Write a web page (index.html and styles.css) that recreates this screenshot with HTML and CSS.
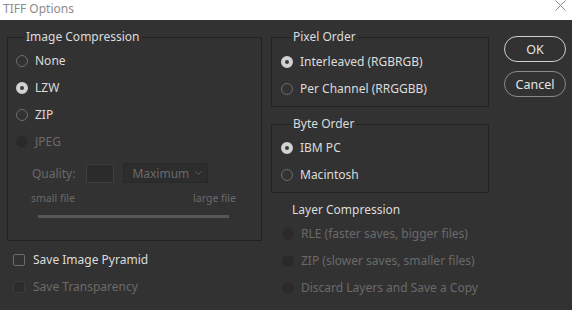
FILE: index.html
```html
<!DOCTYPE html>
<html lang="en">
<head>
    <meta charset="UTF-8">
    <title>TIFF Options</title>
    <link rel="stylesheet" href="styles.css">
</head>
<body>

    <div class="titlebar">
        <span class="title">TIFF Options</span>
        <svg class="close" width="11" height="11" viewBox="0 0 11 11">
            <path d="M0.5 0.5 L10.5 10.5 M10.5 0.5 L0.5 10.5" stroke="#8a8a8a" stroke-width="1" fill="none"/>
        </svg>
    </div>

    <main class="dialog">
        <!-- Left column -->
        <div class="col col-left">
            <fieldset class="group group-compression">
                <legend>Image Compression</legend>
                <label class="option"><span class="radio"></span>None</label>
                <label class="option"><span class="radio checked"></span>LZW</label>
                <label class="option"><span class="radio"></span>ZIP</label>
                <label class="option disabled"><span class="radio"></span>JPEG</label>

                <div class="quality-row">
                    <span class="quality-label">Quality:</span>
                    <span class="quality-input"></span>
                    <span class="quality-select">
                        Maximum
                        <svg class="chevron" width="7" height="4" viewBox="0 0 7 4">
                            <path d="M0.5 0.5 L3.5 3.5 L6.5 0.5" stroke="#5e5e5e" fill="none"/>
                        </svg>
                    </span>
                </div>
                <div class="size-labels">
                    <span>small file</span>
                    <span>large file</span>
                </div>
                <div class="slider"></div>
            </fieldset>

            <div class="checks">
                <label class="option"><span class="checkbox"></span>Save Image Pyramid</label>
                <label class="option disabled"><span class="checkbox"></span>Save Transparency</label>
            </div>
        </div>

        <!-- Middle column -->
        <div class="col col-mid">
            <fieldset class="group group-narrow">
                <legend>Pixel Order</legend>
                <label class="option"><span class="radio checked"></span>Interleaved (RGBRGB)</label>
                <label class="option"><span class="radio"></span>Per Channel (RRGGBB)</label>
            </fieldset>

            <fieldset class="group group-narrow group-byte">
                <legend>Byte Order</legend>
                <label class="option"><span class="radio checked"></span>IBM PC</label>
                <label class="option"><span class="radio"></span>Macintosh</label>
            </fieldset>

            <div class="layer">
                <div class="layer-title">Layer Compression</div>
                <label class="option disabled"><span class="radio"></span>RLE (faster saves, bigger files)</label>
                <label class="option disabled"><span class="radio"></span>ZIP (slower saves, smaller files)</label>
                <label class="option disabled"><span class="radio"></span>Discard Layers and Save a Copy</label>
            </div>
        </div>

        <!-- Buttons -->
        <div class="col col-buttons">
            <button class="btn btn-primary">OK</button>
            <button class="btn">Cancel</button>
        </div>
    </main>

</body>
</html>
```

FILE: styles.css
```css
/* --- Theme --- */
:root {
    --bg: #323232;
    --text: #dcdcdc;
    --text-disabled: #6a6a6a;
    --line: #222222;
    --radio-border: #6c6c6c;
}

* {
    box-sizing: border-box;
    margin: 0;
    padding: 0;
}

body {
    font-family: "Noto Sans", "Open Sans", sans-serif;
    font-size: 12px;
    background-color: var(--bg);
    color: var(--text);
    width: 572px;
    height: 310px;
    overflow: hidden;
}

/* --- Title bar --- */
.titlebar {
    height: 20px;
    background: #ffffff;
    display: flex;
    justify-content: space-between;
    align-items: flex-start;
}

.title {
    font-size: 12px;
    line-height: 17px;
    color: #8c8c8c;
    margin-left: 3px;
}

.close {
    margin: 0 6px 0 0;
}

/* --- Dialog layout --- */
.dialog {
    display: flex;
    padding: 9px 0 0 7px;
}

.col-left {
    width: 255px;
}

.col-mid {
    width: 218px;
    margin-left: 9px;
}

.col-buttons {
    margin-left: 15px;
    padding-top: 7px;
    display: flex;
    flex-direction: column;
    gap: 9px;
}

/* --- Groups --- */
.group {
    border: 1px solid var(--line);
    min-width: 0;
    padding: 2px 8px 22px 8px;
}

.group legend {
    line-height: 16px;
    padding: 0 2px;
    margin-left: 8px;
}

.group-narrow {
    padding: 3px 9px 4px 9px;
}

.group-narrow legend {
    margin-left: 10px;
}

.group-byte {
    margin-top: 9px;
    padding-top: 2px;
}

/* --- Options (radio / checkbox rows) --- */
.option {
    display: flex;
    align-items: center;
    height: 27px;
    gap: 7px;
    white-space: nowrap;
}

.option.disabled {
    color: var(--text-disabled);
}

.radio {
    width: 12px;
    height: 12px;
    border-radius: 50%;
    border: 1px solid var(--radio-border);
    flex-shrink: 0;
}

.radio.checked {
    border: 4px solid #d2d2d2;
    background: #3a3a3a;
}

.disabled .radio {
    border-color: #2a2a2a;
    background: #2a2a2a;
}

.checkbox {
    width: 12px;
    height: 12px;
    border: 1px solid var(--radio-border);
    border-radius: 2px;
    flex-shrink: 0;
}

.disabled .checkbox {
    border-color: #3c3c3c;
    background: #2c2c2c;
}

.checks {
    margin-top: 5px;
    padding-left: 6px;
}

.checks .option {
    gap: 8px;
}

/* --- Quality controls --- */
.quality-row {
    display: flex;
    align-items: center;
    height: 20px;
    margin: 8px 0 0 16px;
    color: var(--text-disabled);
}

.quality-input {
    width: 28px;
    height: 19px;
    border: 1px solid #3e3e3e;
    background: #2b2b2b;
    margin-left: 11px;
}

.quality-select {
    width: 85px;
    height: 20px;
    border: 1px solid #282828;
    border-radius: 2px;
    background: #2d2d2d;
    margin-left: 9px;
    padding-left: 8px;
    display: flex;
    align-items: center;
    justify-content: space-between;
}

.chevron {
    margin-right: 5px;
}

.size-labels {
    display: flex;
    justify-content: space-between;
    height: 14px;
    line-height: 14px;
    margin: 8px 17px 0 15px;
    font-size: 10.5px;
    color: var(--text-disabled);
}

.slider {
    height: 3px;
    width: 191px;
    background: #575757;
    margin: 10px 0 0 22px;
}

/* --- Layer compression --- */
.layer {
    padding-left: 11px;
    margin-top: 9px;
}

.layer-title {
    line-height: 16px;
    margin-left: 10px;
    margin-bottom: 2px;
}

/* --- Buttons --- */
.btn {
    width: 62px;
    height: 26px;
    border-radius: 13px;
    border: 1px solid #8a8a8a;
    background: transparent;
    color: #e4e4e4;
    font-family: inherit;
    font-size: 12.5px;
    cursor: pointer;
}

.btn-primary {
    border: 1.5px solid #cfcfcf;
}
```
